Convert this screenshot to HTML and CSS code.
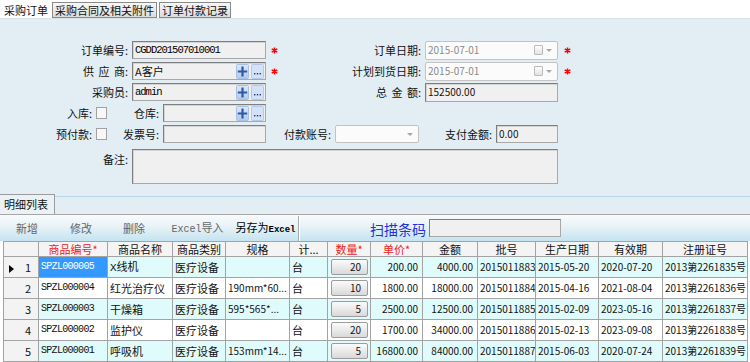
FILE: index.html
```html
<!DOCTYPE html>
<html lang="zh-CN">
<head>
<meta charset="utf-8">
<title>采购订单</title>
<link rel="stylesheet" href="styles.css">
</head>
<body>
<div class="top-tabs">
  <span class="ttab ttab-active">采购订单</span>
  <span class="ttab">采购合同及相关附件</span>
  <span class="ttab">订单付款记录</span>
</div>

<div class="form">
  <div class="row">
    <span class="lbl lbl-main">订单编号:</span>
    <div class="inp inp-main"><span class="mono">CGDD201507010001</span></div>
    <span class="star-cell"><svg class="star" width="7" height="7" viewBox="0 0 7 7"><path d="M3.5 0.4v6.2M0.7 1.9l5.6 3.2M0.7 5.1l5.6-3.2" stroke="#f00" stroke-width="1.5"/></svg></span>
    <span class="lbl lbl-right">订单日期:</span>
    <div class="date"><span class="dtext num">2015-07-01</span><span class="cal"></span><span class="dd"></span></div>
    <svg class="star star-r" width="7" height="7" viewBox="0 0 7 7"><path d="M3.5 0.4v6.2M0.7 1.9l5.6 3.2M0.7 5.1l5.6-3.2" stroke="#f00" stroke-width="1.5"/></svg>
  </div>
  <div class="row">
    <span class="lbl lbl-main spaced">供 应 商:</span>
    <div class="inp inp-main"><span class="itext">A客户</span>
      <svg class="ibtn" width="13" height="15" viewBox="0 0 13 15"><defs><linearGradient id="pg1" x1="0" y1="0" x2="0" y2="1"><stop offset="0" stop-color="#dce8f8"/><stop offset="1" stop-color="#b3c9ec"/></linearGradient></defs><rect x="0.5" y="0.5" width="12" height="14" rx="1" fill="url(#pg1)" stroke="#a9c0e4"/><path d="M6.5 2.5v10M1.8 7.5h9.4" stroke="#2d5aa3" stroke-width="2.2"/></svg>
      <svg class="ibtn" width="13" height="15" viewBox="0 0 13 15"><rect x="0.5" y="0.5" width="12" height="14" rx="1" fill="#d3e2f6" stroke="#b4c9e8"/><rect x="3" y="9" width="1.4" height="1.4" fill="#1f3c7c"/><rect x="5.8" y="9" width="1.4" height="1.4" fill="#1f3c7c"/><rect x="8.6" y="9" width="1.4" height="1.4" fill="#1f3c7c"/></svg>
    </div>
    <span class="star-cell"><svg class="star" width="7" height="7" viewBox="0 0 7 7"><path d="M3.5 0.4v6.2M0.7 1.9l5.6 3.2M0.7 5.1l5.6-3.2" stroke="#f00" stroke-width="1.5"/></svg></span>
    <span class="lbl lbl-right">计划到货日期:</span>
    <div class="date"><span class="dtext num">2015-07-01</span><span class="cal"></span><span class="dd"></span></div>
    <svg class="star star-r" width="7" height="7" viewBox="0 0 7 7"><path d="M3.5 0.4v6.2M0.7 1.9l5.6 3.2M0.7 5.1l5.6-3.2" stroke="#f00" stroke-width="1.5"/></svg>
  </div>
  <div class="row">
    <span class="lbl lbl-main">采购员:</span>
    <div class="inp inp-main"><span class="itext mono">admin</span>
      <svg class="ibtn" width="13" height="15" viewBox="0 0 13 15"><defs><linearGradient id="pg2" x1="0" y1="0" x2="0" y2="1"><stop offset="0" stop-color="#dce8f8"/><stop offset="1" stop-color="#b3c9ec"/></linearGradient></defs><rect x="0.5" y="0.5" width="12" height="14" rx="1" fill="url(#pg2)" stroke="#a9c0e4"/><path d="M6.5 2.5v10M1.8 7.5h9.4" stroke="#2d5aa3" stroke-width="2.2"/></svg>
      <svg class="ibtn" width="13" height="15" viewBox="0 0 13 15"><rect x="0.5" y="0.5" width="12" height="14" rx="1" fill="#d3e2f6" stroke="#b4c9e8"/><rect x="3" y="9" width="1.4" height="1.4" fill="#1f3c7c"/><rect x="5.8" y="9" width="1.4" height="1.4" fill="#1f3c7c"/><rect x="8.6" y="9" width="1.4" height="1.4" fill="#1f3c7c"/></svg>
    </div>
    <span class="star-cell"></span>
    <span class="lbl lbl-right spaced">总 金 额:</span>
    <div class="inp inp-total"><span class="num">152500.00</span></div>
  </div>
  <div class="row">
    <span class="lbl lbl-cb">入库:</span>
    <span class="cb"></span>
    <span class="lbl lbl-sub">仓库:</span>
    <div class="inp inp-sub"><span class="itext"></span>
      <svg class="ibtn" width="13" height="15" viewBox="0 0 13 15"><defs><linearGradient id="pg3" x1="0" y1="0" x2="0" y2="1"><stop offset="0" stop-color="#dce8f8"/><stop offset="1" stop-color="#b3c9ec"/></linearGradient></defs><rect x="0.5" y="0.5" width="12" height="14" rx="1" fill="url(#pg3)" stroke="#a9c0e4"/><path d="M6.5 2.5v10M1.8 7.5h9.4" stroke="#2d5aa3" stroke-width="2.2"/></svg>
      <svg class="ibtn" width="13" height="15" viewBox="0 0 13 15"><rect x="0.5" y="0.5" width="12" height="14" rx="1" fill="#d3e2f6" stroke="#b4c9e8"/><rect x="3" y="9" width="1.4" height="1.4" fill="#1f3c7c"/><rect x="5.8" y="9" width="1.4" height="1.4" fill="#1f3c7c"/><rect x="8.6" y="9" width="1.4" height="1.4" fill="#1f3c7c"/></svg>
    </div>
  </div>
  <div class="row row-last">
    <span class="lbl lbl-cb">预付款:</span>
    <span class="cb"></span>
    <span class="lbl lbl-sub">发票号:</span>
    <div class="inp inp-sub"></div>
    <span class="lbl lbl-acct">付款账号:</span>
    <div class="select"><span class="dtext"></span><span class="dd"></span></div>
    <span class="lbl lbl-pay">支付金额:</span>
    <div class="inp inp-pay"><span class="num">0.00</span></div>
  </div>
  <div class="row row-memo">
    <span class="lbl lbl-main lbl-top">备注:</span>
    <div class="memo"></div>
  </div>
</div>

<div class="detail-tabs">
  <span class="dtab">明细列表</span>
  <span class="dtab-fill"></span>
</div>

<div class="toolbar">
  <span class="tbtn tb-add">新增</span>
  <span class="tbtn tb-edit">修改</span>
  <span class="tbtn tb-del">删除</span>
  <span class="tbtn tb-imp"><span class="tb-mono">Excel</span>导入</span>
  <span class="tbtn tb-exp">另存为<span class="tb-mono-b">Excel</span></span>
  <span class="tb-sep"></span>
  <span class="scan-label">扫描条码</span>
  <span class="scan-input"></span>
</div>

<table class="grid">
  <colgroup>
    <col class="c-rh"><col class="c-code"><col class="c-name"><col class="c-cat"><col class="c-spec"><col class="c-unit"><col class="c-qty"><col class="c-price"><col class="c-amt"><col class="c-lot"><col class="c-mfg"><col class="c-exp"><col class="c-reg">
  </colgroup>
  <thead>
    <tr><th></th><th class="req">商品编号*</th><th>商品名称</th><th>商品类别</th><th>规格</th><th>计...</th><th class="req">数量*</th><th class="req">单价*</th><th>金额</th><th>批号</th><th>生产日期</th><th>有效期</th><th>注册证号</th></tr>
  </thead>
  <tbody>
    <tr class="odd">
      <td class="rh"><svg class="cur" width="5" height="8" viewBox="0 0 5 8"><path d="M0 0L5 4L0 8Z" fill="#000"/></svg><span>1</span></td>
      <td class="code sel">SPZL000005</td><td><span class="mono-s">X</span>线机</td><td>医疗设备</td><td class="tn"></td><td>台</td>
      <td class="qty"><span class="qbtn tn">20</span></td><td class="r tn">200.00</td><td class="r tn">4000.00</td>
      <td class="tn">2015011883</td><td class="tn">2015-05-20</td><td class="tn">2020-07-20</td><td class="tn">2013第2261835号</td>
    </tr>
    <tr>
      <td class="rh"><span></span><span>2</span></td>
      <td class="code">SPZL000004</td><td>红光治疗仪</td><td>医疗设备</td><td class="tn spec">190mm*60...</td><td>台</td>
      <td class="qty"><span class="qbtn tn">10</span></td><td class="r tn">1800.00</td><td class="r tn">18000.00</td>
      <td class="tn">2015011884</td><td class="tn">2015-04-16</td><td class="tn">2021-08-04</td><td class="tn">2013第2261836号</td>
    </tr>
    <tr class="odd">
      <td class="rh"><span></span><span>3</span></td>
      <td class="code">SPZL000003</td><td>干燥箱</td><td>医疗设备</td><td class="tn spec">595*565*...</td><td>台</td>
      <td class="qty"><span class="qbtn tn">5</span></td><td class="r tn">2500.00</td><td class="r tn">12500.00</td>
      <td class="tn">2015011885</td><td class="tn">2015-02-09</td><td class="tn">2023-05-16</td><td class="tn">2013第2261837号</td>
    </tr>
    <tr>
      <td class="rh"><span></span><span>4</span></td>
      <td class="code">SPZL000002</td><td>监护仪</td><td>医疗设备</td><td class="tn"></td><td>台</td>
      <td class="qty"><span class="qbtn tn">20</span></td><td class="r tn">1700.00</td><td class="r tn">34000.00</td>
      <td class="tn">2015011886</td><td class="tn">2015-02-13</td><td class="tn">2023-09-08</td><td class="tn">2013第2261838号</td>
    </tr>
    <tr class="odd">
      <td class="rh"><span></span><span>5</span></td>
      <td class="code">SPZL000001</td><td>呼吸机</td><td>医疗设备</td><td class="tn spec">153mm*14...</td><td>台</td>
      <td class="qty"><span class="qbtn tn">5</span></td><td class="r tn">16800.00</td><td class="r tn">84000.00</td>
      <td class="tn">2015011887</td><td class="tn">2015-06-03</td><td class="tn">2020-07-24</td><td class="tn">2013第2261839号</td>
    </tr>
  </tbody>
</table>
</body>
</html>
```

FILE: styles.css
```css
* { box-sizing: border-box; }
html, body { margin: 0; padding: 0; }
body {
  width: 750px;
  height: 362px;
  overflow: hidden;
  background: #fff;
  font-family: "Noto Sans CJK SC", "Liberation Sans", sans-serif;
  font-size: 11px;
  line-height: 14px;
  color: #111;
}

/* top tabs */
.top-tabs {
  height: 19px;
  display: flex;
  align-items: flex-start;
  padding-top: 2px;
  background: #fff;
  border-bottom: 1px solid #d5e3ec;
}
.ttab {
  height: 16px;
  line-height: 14px;
  padding: 0 2px;
  margin-left: 2px;
  border: 1px solid #8a8a8a;
  background: linear-gradient(#f7f7f7, #dcdcdc);
  white-space: nowrap;
}
.ttab-active {
  width: 50px;
  margin-left: 0;
  padding-left: 3px;
  border-color: transparent;
  background: none;
}

/* form */
.form {
  background: #e2eef4;
  padding: 22px 0 10px;
}
.row {
  display: flex;
  align-items: center;
  height: 18px;
  margin-bottom: 3px;
}
.row-last { margin-bottom: 6px; }
.row-memo { height: 35px; align-items: flex-start; margin-bottom: 0; }
.lbl {
  flex: none;
  text-align: right;
  padding-right: 4px;
  white-space: nowrap;
  color: #111;
}
.lbl-top { padding-top: 3px; }
.spaced { word-spacing: 2px; }
.lbl-main { width: 132px; }
.lbl-right { width: 85px; }
.lbl-cb { width: 96px; }
.lbl-sub { width: 56px; }
.lbl-acct { width: 69px; }
.lbl-pay { width: 77px; }

.inp {
  flex: none;
  height: 18px;
  display: flex;
  align-items: center;
  padding: 0 1px 0 2px;
  background: #f0f0f0;
  border: 1px solid #7e7e7e;
  border-right-color: #a8a8a8;
  border-bottom-color: #a8a8a8;
  box-shadow: inset 1px 1px 0 #d4d4d4;
}
.inp-main { width: 134px; }
.inp-sub { width: 103px; }
.inp-total { width: 133px; height: 19px; }
.inp-pay { width: 62px; }
.itext { flex: 1; white-space: nowrap; }
.ibtn { flex: none; display: block; margin-left: 2px; }

.mono {
  font-family: "Liberation Mono", monospace;
  font-size: 10.5px;
  letter-spacing: -1px;
  color: #000;
}
.num { font-size: 10px; }
.tn { font-size: 10px; }

.star-cell { width: 74px; flex: none; display: flex; align-items: center; padding-left: 5px; }
.star { display: block; }
.star-r { margin-left: 6px; }

.date, .select {
  flex: none;
  height: 19px;
  display: flex;
  align-items: center;
  padding-left: 2px;
  background: #fbfbfb;
  border: 1px solid #c3c3c3;
  border-radius: 2px;
  color: #8a8a8a;
}
.date { width: 133px; }
.select { width: 84px; height: 18px; }
.dtext { flex: 1; }
.cal {
  width: 9px;
  height: 10px;
  margin-right: 3px;
  border: 1px solid #bababa;
  border-radius: 1px;
  background: linear-gradient(#ffffff, #e2e2e2);
}
.dd {
  width: 0;
  height: 0;
  margin-right: 5px;
  border-left: 3px solid transparent;
  border-right: 3px solid transparent;
  border-top: 3px solid #a6a6a6;
}

.cb {
  flex: none;
  width: 11px;
  height: 12px;
  border: 1px solid #a2a2a2;
  background: #f7f7f7;
}

.memo {
  width: 426px;
  height: 35px;
  background: #f0f0f0;
  border: 1px solid #7e7e7e;
  border-right-color: #a8a8a8;
  border-bottom-color: #a8a8a8;
  box-shadow: inset 1px 1px 0 #d4d4d4;
}

/* detail tabs */
.detail-tabs {
  height: 20px;
  display: flex;
  background: #e2eef4;
}
.dtab {
  width: 55px;
  height: 20px;
  padding-left: 4px;
  line-height: 19px;
  border-top: 1px solid #9c9c9c;
  border-right: 1px solid #9c9c9c;
  background: #eaf2f6;
  color: #111;
}
.dtab-fill {
  flex: 1;
  margin-top: 2px;
  border-top: 1px solid #b8d5e6;
}

/* toolbar */
.toolbar {
  height: 27px;
  display: flex;
  align-items: center;
  border-top: 1px solid #a6a6a6;
  background: linear-gradient(#f8fbfc 0%, #eaf3f7 40%, #c4e4f1 100%);
}
.tbtn { flex: none; text-align: center; color: #666; white-space: nowrap; }
.tb-add { width: 54px; }
.tb-edit { width: 54px; }
.tb-del { width: 52px; }
.tb-imp { width: 75px; }
.tb-exp { width: 61px; color: #000; }
.tb-mono { font-family: "Liberation Mono", monospace; font-size: 10px; }
.tb-mono-b { font-family: "Liberation Mono", monospace; font-size: 9px; font-weight: bold; }
.tb-sep {
  flex: none;
  width: 2px;
  height: 25px;
  margin-left: 2px;
  border-left: 1px solid #a9a9a9;
  border-right: 1px solid #ffffff;
}
.scan-label {
  flex: none;
  width: 56px;
  margin-left: 70px;
  color: #2233dd;
  font-size: 14px;
  line-height: 18px;
  padding-top: 1px;
}
.scan-input {
  flex: none;
  width: 132px;
  height: 18px;
  margin-left: 3px;
  background: #f0f0f0;
  border: 1px solid #7e7e7e;
  border-right-color: #a8a8a8;
  border-bottom-color: #a8a8a8;
}

/* grid */
.grid {
  margin-left: 3px;
  width: 743px;
  border-collapse: collapse;
  table-layout: fixed;
}
.c-rh { width: 35px; }
.c-code { width: 69px; }
.c-name { width: 65px; }
.c-cat { width: 53px; }
.c-spec { width: 64px; }
.c-unit { width: 38px; }
.c-qty { width: 43px; }
.c-price { width: 52px; }
.c-amt { width: 55px; }
.c-lot { width: 58px; }
.c-mfg { width: 63px; }
.c-exp { width: 64px; }
.c-reg { width: 85px; }
.grid th, .grid td {
  border: 1px solid #a3a3a3;
  padding: 0 2px;
  white-space: nowrap;
  overflow: hidden;
  text-align: left;
  font-weight: normal;
}
.grid th {
  height: 15px;
  line-height: 13px;
  text-align: center;
  background: #f4f4f4;
  color: #111;
}
.grid th.req { color: #ee1c1c; }
.grid td { height: 19.4px; line-height: 14px; background: #fff; }
.grid tr.odd td { background: #dffbfb; }
.grid td.rh, .grid tr.odd td.rh { background: #f3f3f3; padding: 0 7px 0 5px; }
.cur { display: inline-block; vertical-align: middle; }
.rh span:last-child { float: right; }
.rh span:first-child { display: inline-block; width: 5px; }
.code { font-family: "Liberation Mono", monospace; font-size: 10px; letter-spacing: -0.7px; }
.grid tr.odd td.sel { background: #3399ff; color: #fff; }
.mono-s { font-family: "Liberation Mono", monospace; font-size: 11px; }
.r { text-align: right; }
.grid td.r { text-align: right; padding-right: 4px; }
.grid td.qty { padding: 2px 2px 2px 3px; }
.qbtn {
  display: block;
  height: 16px;
  line-height: 14px;
  text-align: right;
  padding-right: 6px;
  border: 1px solid #9c9c9c;
  border-radius: 2px;
  background: linear-gradient(#fbfbfb, #d9d9d9);
}
```
